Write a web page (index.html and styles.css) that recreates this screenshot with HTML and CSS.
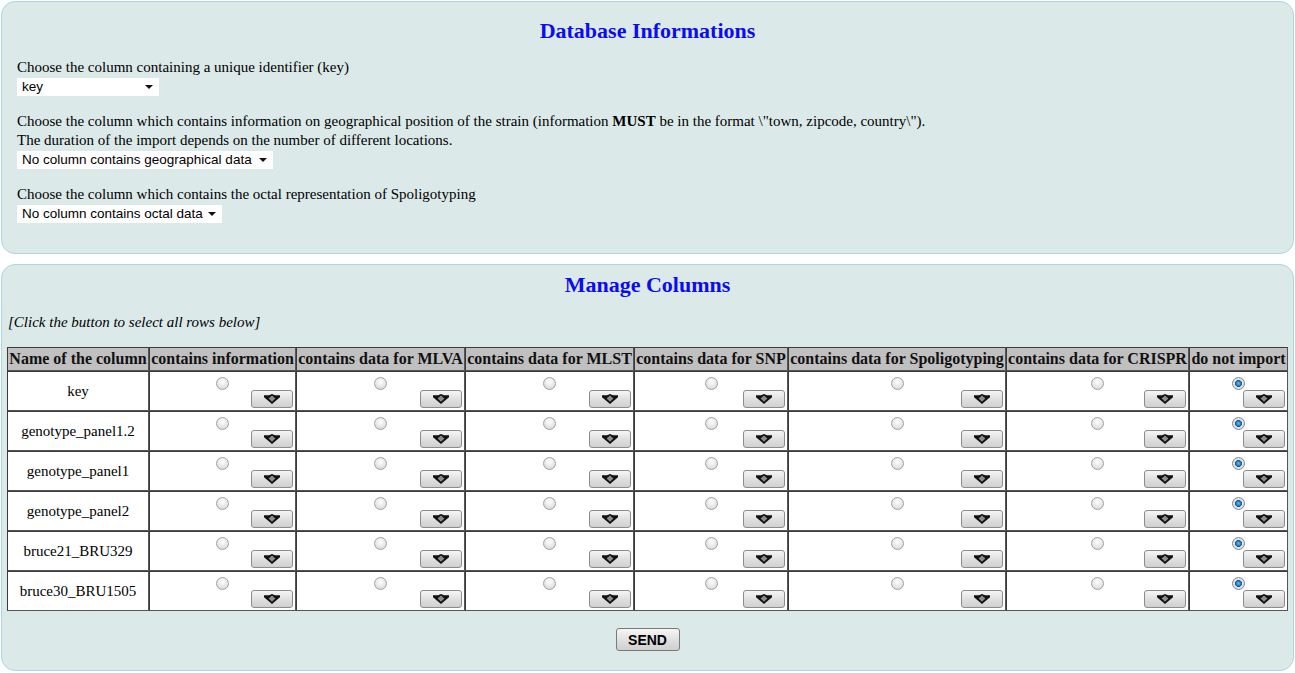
FILE: index.html
```html
<!DOCTYPE html>
<html>
<head>
<meta charset="utf-8">
<link rel="stylesheet" href="styles.css">
</head>
<body>
<div class="panel panel-db">
  <h1 class="title">Database Informations</h1>
  <div class="field">
    <p class="label">Choose the column containing a unique identifier (key)</p>
    <span class="sel sel-key"><select><option>key</option></select></span>
  </div>
  <div class="field">
    <p class="label">Choose the column which contains information on geographical position of the strain (information <b>MUST</b> be in the format \"town, zipcode, country\").<br>The duration of the import depends on the number of different locations.</p>
    <span class="sel sel-geo"><select><option>No column contains geographical data</option></select></span>
  </div>
  <div class="field">
    <p class="label">Choose the column which contains the octal representation of Spoligotyping</p>
    <span class="sel sel-oct"><select><option>No column contains octal data</option></select></span>
  </div>
</div>

<div class="panel panel-cols">
  <h2 class="title">Manage Columns</h2>
  <p class="hint">[Click the button to select all rows below]</p>
  <table class="grid">
    <colgroup>
      <col class="c1"><col class="c2"><col class="c3"><col class="c4"><col class="c5"><col class="c6"><col class="c7"><col class="c8">
    </colgroup>
    <thead>
      <tr>
        <th>Name of the column</th>
        <th>contains information</th>
        <th>contains data for MLVA</th>
        <th>contains data for MLST</th>
        <th>contains data for SNP</th>
        <th>contains data for Spoligotyping</th>
        <th>contains data for CRISPR</th>
        <th>do not import</th>
      </tr>
    </thead>
    <tbody id="rows"></tbody>
  </table>
  <div class="actions"><button class="send">SEND</button></div>
</div>
<script src="script.js"></script>
</body>
</html>
```

FILE: script.js
```js
(function () {
  var names = ["key", "genotype_panel1.2", "genotype_panel1", "genotype_panel2", "bruce21_BRU329", "bruce30_BRU1505"];
  var icon = '<svg width="16" height="10" viewBox="0 0 16 10"><path d="M0 1.2 L5 1.2 L8 0 L11 1.2 L16 1.2 L16 3.2 L8 10 L0 3.2 Z" fill="#111"/><path d="M8 1.4 L11.4 4.6 L8 7.8 L4.6 4.6 Z" fill="#8c8c8c"/></svg>';
  var tbody = document.getElementById("rows");
  var html = "";
  names.forEach(function (n, i) {
    html += "<tr><td class=\"name\">" + n + "</td>";
    for (var c = 0; c < 7; c++) {
      html += "<td class=\"opt\"><div class=\"cell\"><input type=\"radio\" class=\"rb\" name=\"r" + i + "\"" + (c === 6 ? " checked" : "") + "><button class=\"pick\">" + icon + "</button></div></td>";
    }
    html += "</tr>";
  });
  tbody.innerHTML = html;
})();
```

FILE: styles.css
```css
html, body {
  margin: 0;
  padding: 0;
  background: #ffffff;
}
body {
  padding: 1px 1px 0 1px;
  font-family: "Liberation Serif", "Times New Roman", serif;
  font-size: 15px;
  color: #000;
}
.panel {
  background: #dce9e9;
  border: 1px solid #b0d4e0;
  border-radius: 14px;
}
.panel-db {
  padding: 17px 15px 0 15px;
  box-sizing: border-box;
  height: 253px;
}
.panel-cols {
  margin-top: 10px;
  padding: 8px 5px 0 5px;
  box-sizing: border-box;
  height: 407px;
}
.title {
  margin: 0;
  text-align: center;
  font-weight: bold;
  font-size: 22px;
  line-height: 24px;
  color: #0c0cf0;
}
.panel-db .title {
  margin-bottom: 2px;
}
.field {
  margin-top: 15px;
}
.label {
  margin: 0;
  line-height: 19px;
}
.sel {
  display: inline-block;
  position: relative;
  margin-top: 1px;
  vertical-align: top;
}
.sel select {
  appearance: none;
  -webkit-appearance: none;
  display: block;
  height: 18px;
  border: 0;
  border-radius: 0;
  background: #ffffff;
  font-family: "Liberation Sans", Arial, sans-serif;
  font-size: 13.5px;
  color: #000;
  padding: 0 0 0 5px;
  margin: 0;
  line-height: 18px;
}
.sel::after {
  content: "";
  position: absolute;
  right: 6px;
  top: 7px;
  border-left: 4px solid transparent;
  border-right: 4px solid transparent;
  border-top: 4px solid #111;
}
.field .sel {
  margin-bottom: 1px;
}
.sel-key select { width: 142px; }
.sel-geo select { width: 256px; }
.sel-oct select { width: 205px; }
.hint {
  margin: 16px 0 0 1px;
  font-style: italic;
  line-height: 19px;
}
.grid {
  margin-top: 15px;
  width: 1281px;
  table-layout: fixed;
  border-collapse: separate;
  border-spacing: 0;
  background: #ffffff;
}
.c1 { width: 142px; }
.c2 { width: 147px; }
.c3 { width: 169px; }
.c4 { width: 169px; }
.c5 { width: 154px; }
.c6 { width: 218px; }
.c7 { width: 183px; }
.c8 { width: 99px; }
.grid th, .grid td {
  border: 1px solid #3a3a3a;
  border-right-color: #555;
  border-bottom-color: #555;
}
.grid th {
  background: #c0c0c0;
  font-weight: bold;
  font-size: 16px;
  line-height: 22px;
  padding: 0;
  white-space: nowrap;
  text-align: center;
  color: #111;
}
.grid td {
  height: 38px;
  padding: 0;
}
.grid td.name {
  text-align: center;
  vertical-align: middle;
}
.cell {
  height: 38px;
  display: flex;
  flex-direction: column;
  padding: 5px 2px 2px 2px;
  box-sizing: border-box;
}
.rb {
  appearance: none;
  -webkit-appearance: none;
  width: 13px;
  height: 13px;
  margin: 0;
  border-radius: 50%;
  border: 1px solid #a2a2a2;
  background: radial-gradient(circle at 50% 35%, #ffffff 0%, #e6e6e6 55%, #cfcfcf 100%);
  align-self: center;
  box-sizing: border-box;
}
.rb:checked {
  border-color: #7a8a96;
  background: radial-gradient(circle at 50% 50%, #5bc0f5 0%, #1f7fc8 30%, #1a4f7a 42%, #e8e8e8 48%, #d5d5d5 100%);
}
.pick {
  margin-top: auto;
  align-self: flex-end;
  width: 42px;
  height: 18px;
  padding: 0;
  border: 1px solid #8c8c8c;
  border-radius: 3px;
  background: linear-gradient(#f6f6f6, #dedede 55%, #d0d0d0);
  display: flex;
  align-items: center;
  justify-content: center;
}
.pick svg { display: block; }
.actions {
  margin-top: 17px;
  text-align: center;
}
.send {
  height: 23px;
  width: 64px;
  padding: 0;
  border: 1px solid #7a7a7a;
  border-radius: 3px;
  background: linear-gradient(#f6f6f6, #dddddd 60%, #cfcfcf);
  font-family: "Liberation Sans", Arial, sans-serif;
  font-weight: bold;
  font-size: 14px;
  color: #000;
}
```
